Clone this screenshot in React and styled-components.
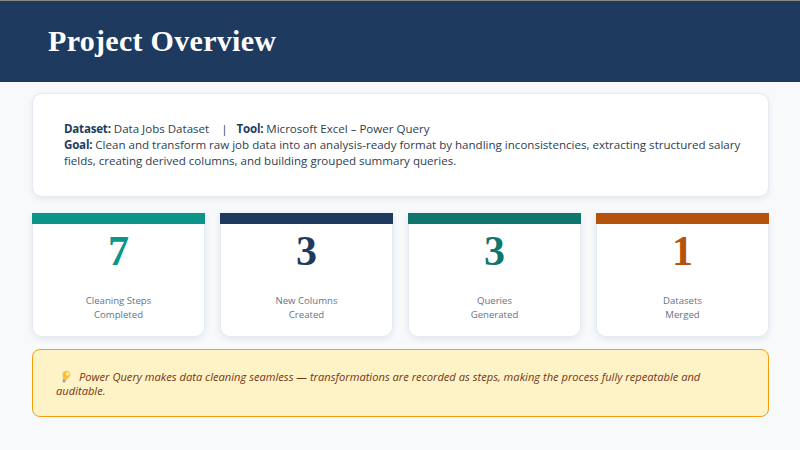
import React from "react";
import styled, { createGlobalStyle } from "styled-components";

const GlobalStyle = createGlobalStyle`
  html, body { margin: 0; padding: 0; }
  body {
    width: 800px;
    height: 450px;
    overflow: hidden;
    background: #f7f9fb;
    font-family: "Open Sans", "Noto Sans", sans-serif;
  }
`;

const Page = styled.div`
  width: 800px;
  height: 450px;
  display: flex;
  flex-direction: column;
`;

const Header = styled.header`
  height: 81px;
  border-top: 1px solid #8a8a85;
  background: #1e3a5f;
  display: flex;
  align-items: center;
  padding-left: 48px;
`;

const Title = styled.h1`
  margin: 0 0 2px;
  font-family: "Liberation Serif", "DejaVu Serif", serif;
  font-size: 30px;
  font-weight: 700;
  letter-spacing: 0.3px;
  color: #ffffff;
`;

const Content = styled.main`
  display: flex;
  flex-direction: column;
  padding: 11px 31px 0 32px;
`;

const InfoCard = styled.section`
  height: 104px;
  margin-bottom: 16px;
  padding: 0 26px 0 31px;
  box-sizing: border-box;
  display: flex;
  flex-direction: column;
  justify-content: center;
  background: #ffffff;
  border-radius: 10px;
  border: 1px solid #e6ebf1;
  box-shadow: 0 2px 6px rgba(30, 58, 95, 0.08);
  font-size: 11.55px;
  line-height: 16px;
  color: #2d3e50;
`;

const Line = styled.div`
  white-space: nowrap;
`;

const Label = styled.b`
  color: #1e3a5f;
  font-weight: 700;
  letter-spacing: -0.2px;
`;

const Divider = styled.span`
  margin: 0 9px 0 12px;
`;

const Stats = styled.section`
  display: grid;
  grid-template-columns: repeat(4, 173px);
  column-gap: 15px;
  margin-bottom: 12px;
`;

const StatCard = styled.article`
  height: 124px;
  display: flex;
  flex-direction: column;
  align-items: center;
  background: #ffffff;
  border-radius: 0 0 10px 10px;
  box-shadow: inset 0 0 0 1px #e6ebf1, 0 2px 6px rgba(30, 58, 95, 0.1);
`;

const Bar = styled.div`
  align-self: stretch;
  height: 11px;
  background: ${(p) => p.$color};
`;

const Value = styled.div`
  margin-top: 5px;
  font-family: "Liberation Serif", "DejaVu Serif", serif;
  font-size: 42px;
  line-height: 44px;
  font-weight: 700;
  color: ${(p) => p.$color};
`;

const Caption = styled.div`
  margin-top: 21px;
  font-size: 9.6px;
  line-height: 14px;
  text-align: center;
  color: #64748b;
`;

const Note = styled.aside`
  height: 68px;
  box-sizing: border-box;
  padding: 2px 28px 0 23px;
  display: flex;
  align-items: center;
  background: #fef3c7;
  border: 1px solid #f59e0b;
  border-radius: 8px;
`;

const NoteText = styled.p`
  margin: 0;
  font-size: 11.15px;
  line-height: 14px;
  font-style: italic;
  color: #78350f;
`;

const BulbIcon = styled.svg`
  width: 11px;
  height: 14px;
  margin: 0 8px -3px 4px;
`;

const stats = [
  { value: "7", color: "#0d9488", lines: ["Cleaning Steps", "Completed"] },
  { value: "3", color: "#1e3a5f", lines: ["New Columns", "Created"] },
  { value: "3", color: "#0f766e", lines: ["Queries", "Generated"] },
  { value: "1", color: "#b45309", lines: ["Datasets", "Merged"] },
];

function Bulb() {
  return (
    <BulbIcon viewBox="0 0 11 14">
      <g transform="rotate(20 5.5 7)">
        <path d="M5.5 0.6 C8 0.6 9.4 2.4 9.4 4.3 C9.4 6.2 7.8 7.2 7.3 9.4 L3.7 9.4 C3.2 7.2 1.6 6.2 1.6 4.3 C1.6 2.4 3 0.6 5.5 0.6 Z" fill="#fbc02d" />
        <ellipse cx="6.4" cy="3.4" rx="1.9" ry="1.7" fill="#fff0b8" />
        <path d="M3.8 9.4 L7.2 9.4 L6.9 12.2 Q5.5 13.4 4.1 12.2 Z" fill="#aaa3b8" />
      </g>
    </BulbIcon>
  );
}

export default function App() {
  return (
    <Page>
      <GlobalStyle />
      <Header>
        <Title>Project Overview</Title>
      </Header>
      <Content>
        <InfoCard>
          <Line>
            <Label>Dataset:</Label> Data Jobs Dataset<Divider>|</Divider><Label>Tool:</Label> Microsoft Excel – Power Query
          </Line>
          <div>
            <Label>Goal:</Label> Clean and transform raw job data into an analysis-ready format by handling inconsistencies, extracting structured salary fields, creating derived columns, and building grouped summary queries.
          </div>
        </InfoCard>
        <Stats>
          {stats.map((s) => (
            <StatCard key={s.lines[0]}>
              <Bar $color={s.color} />
              <Value $color={s.color}>{s.value}</Value>
              <Caption>
                {s.lines[0]}
                <br />
                {s.lines[1]}
              </Caption>
            </StatCard>
          ))}
        </Stats>
        <Note>
          <NoteText>
            <Bulb />
            Power Query makes data cleaning seamless — transformations are recorded as steps, making the process fully repeatable and auditable.
          </NoteText>
        </Note>
      </Content>
    </Page>
  );
}
